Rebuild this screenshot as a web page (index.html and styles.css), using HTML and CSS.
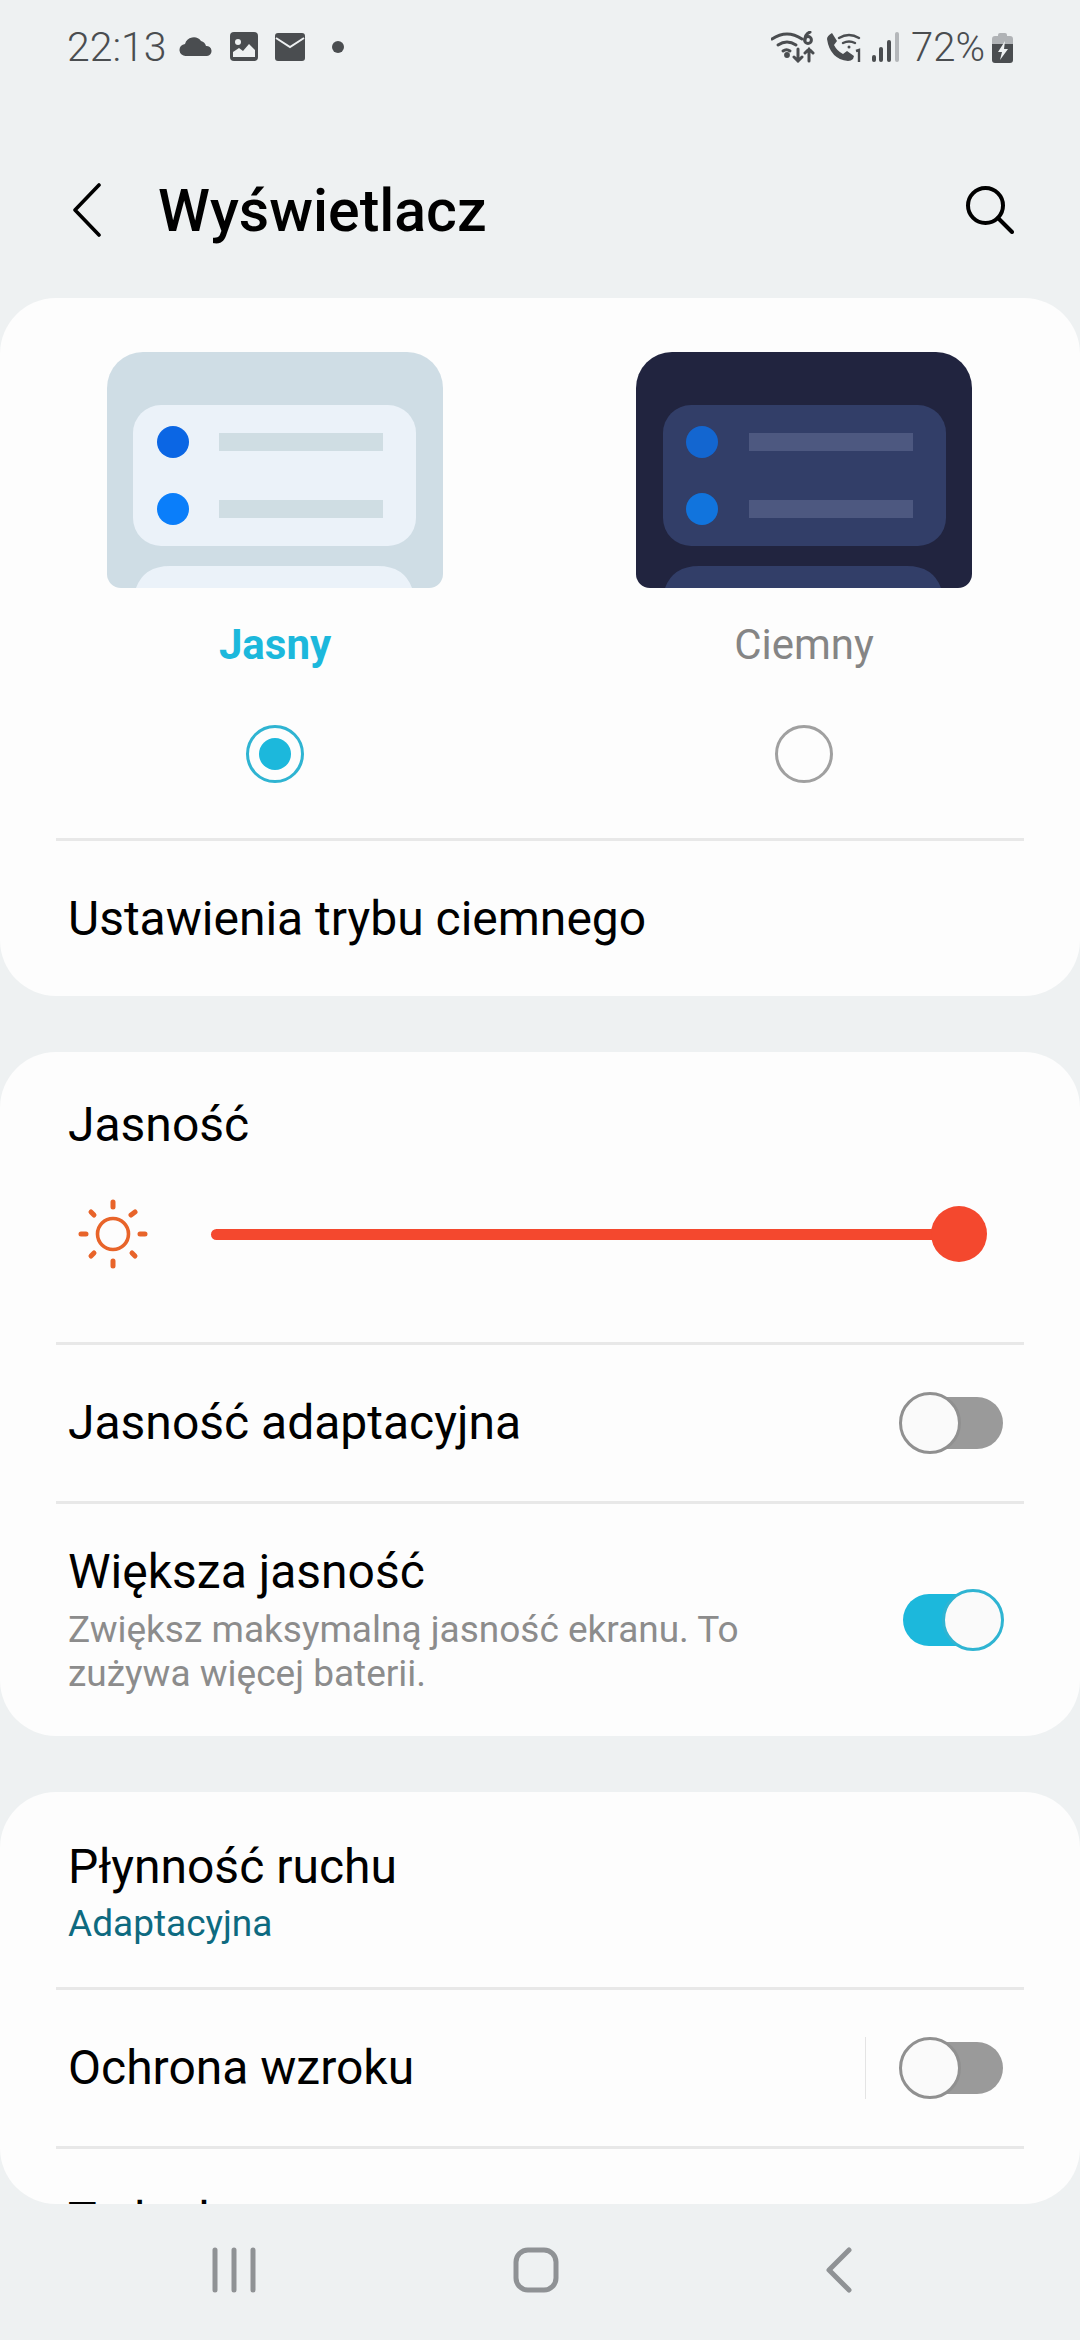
FILE: index.html
```html
<!DOCTYPE html>
<html lang="pl">
<head>
  <meta charset="UTF-8">
  <meta name="viewport" content="width=device-width, initial-scale=1.0">
  <title>Wyświetlacz</title>
  <link rel="stylesheet" href="styles.css">
</head>
<body>
  <div class="screen">
    <!-- Status bar -->
    <div class="status-bar">
      <div class="status-left">
        <span class="clock">22:13</span>
        <svg width="34" height="20" viewBox="0 0 34 20"><path d="M7 19a6 6 0 0 1-1-12 9 9 0 0 1 16-3 7 7 0 0 1 5 5 5 5 0 0 1 1 10z" fill="#4a4d50"/></svg>
        <svg width="30" height="30" viewBox="0 0 30 30"><rect width="28" height="29" x="1" rx="4" fill="#4a4d50"/><circle cx="9" cy="10" r="3" fill="#eef1f2"/><path d="M4 25v-5l6-4 4 3 6-7 6 6v7z" fill="#eef1f2"/></svg>
        <svg width="30" height="28" viewBox="0 0 30 28"><rect width="30" height="28" rx="3" fill="#4a4d50"/><path d="M1 5l14 9 14-9" fill="none" stroke="#eef1f2" stroke-width="2"/></svg>
        <span class="notif-dot"></span>
      </div>
      <div class="status-right">
        <svg class="wifi" width="44" height="32" viewBox="0 0 44 32" fill="none" stroke="#4a4d50" stroke-width="3" stroke-linecap="round"><path d="M1 8q15-10 30 0"/><path d="M7 14q9-6 18 0"/><path d="M12 20q3.5-2.5 7 0"/><circle cx="16" cy="24" r="1.4" fill="#4a4d50"/><path d="M27 18v12M23 26l4 4 4-4"/><path d="M38 30V18M34 22l4-4 4 4"/><circle cx="37" cy="9" r="3.4"/><path d="M34 9q0-6 5-8"/></svg>
        <svg class="call" width="37" height="30" viewBox="0 0 37 30" fill="none"><path d="M6 1l5 8-3 4q3 6 9 9l4-3 7 5-1 3q-2 2-5 2Q4 27 1 7q0-3 5-6z" fill="#4a4d50"/><path d="M13 6q10-6 20 0M17 11q6-3 12 0" stroke="#4a4d50" stroke-width="2.4" stroke-linecap="round"/><circle cx="23" cy="15" r="1.5" fill="#4a4d50"/><path d="M30 19l3-1v12" stroke="#4a4d50" stroke-width="2.4"/></svg>
        <svg class="signal" width="27" height="30" viewBox="0 0 27 30"><rect x="0" y="23" width="4" height="7" rx="2" fill="#4a4d50"/><rect x="7" y="15" width="4" height="15" rx="2" fill="#4a4d50"/><rect x="15" y="8" width="4" height="22" rx="2" fill="#4a4d50"/><rect x="23" y="0" width="4" height="30" rx="2" fill="#b4b7ba"/></svg>
        <span class="battery-text">72%</span>
        <svg width="21" height="31" viewBox="0 0 21 31"><path d="M6 3q0-2 2-2h5q2 0 2 2v1h3q3 0 3 3v5H0V7q0-3 3-3h3z" fill="#b0b3b6"/><path d="M0 12h21v16q0 3-3 3H3q-3 0-3-3z" fill="#4a4d50"/><path d="M13 9l-7 11h4l-2 8 8-11h-4z" fill="#eef1f2"/></svg>
      </div>
    </div>

    <!-- Header -->
    <div class="header">
      <svg width="30" height="54" viewBox="0 0 30 54" fill="none"><path d="M27 2L3 27l24 25" stroke="#000" stroke-width="3.6" stroke-linecap="round" stroke-linejoin="round"/></svg>
      <h1 class="title">Wyświetlacz</h1>
      <svg width="48" height="48" viewBox="0 0 48 48" fill="none" stroke="#000" stroke-width="4" stroke-linecap="round"><circle cx="19.5" cy="19.5" r="17.5"/><path d="M32 32l14 14"/></svg>
    </div>

    <div class="scroller">
      <!-- Theme card -->
      <div class="card">
        <div class="themes">
          <div class="theme">
            <svg width="336" height="236" viewBox="0 0 336 236">
              <path d="M36 0h264a36 36 0 0 1 36 36v186a14 14 0 0 1-14 14H14a14 14 0 0 1-14-14V36A36 36 0 0 1 36 0z" fill="#cfdde5"/>
              <rect x="26" y="53" width="283" height="141" rx="28" fill="#ebf2f9"/>
              <path d="M29 236q8-22 34-22h208q26 0 34 22z" fill="#ebf2f9"/>
              <circle cx="66" cy="90" r="16" fill="#0b66e4"/>
              <circle cx="66" cy="157" r="16" fill="#0a7efa"/>
              <rect x="112" y="81" width="164" height="18" fill="#cfdde3"/>
              <rect x="112" y="148" width="164" height="18" fill="#cfdde3"/>
            </svg>
            <div class="theme-label active">Jasny</div>
            <span class="radio checked"></span>
          </div>
          <div class="theme">
            <svg width="336" height="236" viewBox="0 0 336 236">
              <path d="M36 0h264a36 36 0 0 1 36 36v186a14 14 0 0 1-14 14H14a14 14 0 0 1-14-14V36A36 36 0 0 1 36 0z" fill="#21243f"/>
              <rect x="27" y="53" width="283" height="141" rx="28" fill="#323e68"/>
              <path d="M29 236q8-22 34-22h208q26 0 34 22z" fill="#323e68"/>
              <circle cx="66" cy="90" r="16" fill="#1366d0"/>
              <circle cx="66" cy="157" r="16" fill="#1174dd"/>
              <rect x="113" y="81" width="164" height="18" fill="#4d5880"/>
              <rect x="113" y="148" width="164" height="18" fill="#4d5880"/>
            </svg>
            <div class="theme-label">Ciemny</div>
            <span class="radio"></span>
          </div>
        </div>
        <div class="row row-first with-line">
          <span class="row-title">Ustawienia trybu ciemnego</span>
        </div>
      </div>

      <!-- Brightness card -->
      <div class="card">
        <div class="brightness">
          <span class="row-title">Jasność</span>
          <div class="slider-row">
            <svg width="70" height="70" viewBox="0 0 70 70" fill="none" stroke="#e8642a" stroke-linecap="round">
              <circle cx="35" cy="35" r="15.5" stroke-width="3.6"/>
              <path stroke-width="5" d="M35 3v5M35 62v5M3 35h5M62 35h5M13 13l3 3M54 54l3 3M57 13l-4 3M13 57l3-3"/>
            </svg>
            <div class="slider"><span class="slider-thumb"></span></div>
          </div>
        </div>
        <div class="row row-single with-line">
          <span class="row-title">Jasność adaptacyjna</span>
          <span class="toggle"></span>
        </div>
        <div class="row row-tall with-line">
          <div class="row-text">
            <span class="row-title">Większa jasność</span>
            <span class="row-sub">Zwiększ maksymalną jasność ekranu. To zużywa więcej baterii.</span>
          </div>
          <span class="toggle on"></span>
        </div>
      </div>

      <!-- Motion card, cut off by the nav bar -->
      <div class="card">
        <div class="row row-motion">
          <div class="row-text">
            <span class="row-title">Płynność ruchu</span>
            <span class="row-value">Adaptacyjna</span>
          </div>
        </div>
        <div class="row row-single with-line">
          <span class="row-title">Ochrona wzroku</span>
          <span class="v-line"></span>
          <span class="toggle"></span>
        </div>
        <div class="row row-cut with-line">
          <span class="row-title">Tryb ekranu</span>
        </div>
      </div>
    </div>

    <!-- Nav bar -->
    <div class="nav-bar">
      <svg class="nav-recent" width="46" height="46" viewBox="0 0 46 46" fill="none" stroke="#8f9295" stroke-width="5" stroke-linecap="round"><path d="M4 3v40M23 3v40M42 3v40"/></svg>
      <svg class="nav-home" width="46" height="46" viewBox="0 0 46 46" fill="none" stroke="#8f9295" stroke-width="5"><rect x="3" y="3" width="40" height="40" rx="12"/></svg>
      <svg width="28" height="46" viewBox="0 0 28 46" fill="none" stroke="#8f9295" stroke-width="5" stroke-linecap="round" stroke-linejoin="round"><path d="M24 3L4 23l20 20"/></svg>
    </div>
  </div>
</body>
</html>
```

FILE: styles.css
```css
html, body {
  margin: 0;
  padding: 0;
}

body {
  background-color: #eef1f2;
  font-family: Roboto, "Noto Sans", sans-serif;
  color: #000;
}

.screen {
  width: 1080px;
  height: 2340px;
  display: flex;
  flex-direction: column;
  overflow: hidden;
}

/* Status bar */
.status-bar {
  height: 92px;
  flex: none;
  padding: 2px 67px 0 67px;
  box-sizing: border-box;
  display: flex;
  justify-content: space-between;
  align-items: center;
  color: #4a4d50;
  font-weight: 300;
}

.status-left, .status-right {
  display: flex;
  align-items: center;
}

.status-left {
  gap: 16px;
}

.clock {
  margin-right: -4px;
  font-size: 41px;
}

.wifi {
  margin-right: 11px;
}

.call {
  margin-right: 9px;
}

.signal {
  margin-right: 12px;
}

.battery-text {
  margin-right: 7px;
  font-size: 40px;
}

.notif-dot {
  width: 12px;
  height: 12px;
  margin-left: 11px;
  border-radius: 50%;
  background-color: #4a4d50;
}

/* Header */
.header {
  height: 176px;
  flex: none;
  padding: 30px 66px 0 72px;
  display: flex;
  align-items: center;
}

.title {
  margin: 0 0 0 56px;
  flex: 1;
  font-size: 59px;
  font-weight: 500;
}

/* Cards */
.scroller {
  height: 1906px;
  flex: none;
  overflow: hidden;
  border-radius: 0 0 56px 56px;
}

.card {
  background-color: #fdfdfd;
  border-radius: 56px;
  margin-bottom: 56px;
  padding: 0 56px;
}

.themes {
  padding-top: 54px;
  display: flex;
  justify-content: space-between;
  margin: 0 52px 0 51px;
}

.theme {
  width: 336px;
  height: 486px;
  display: flex;
  flex-direction: column;
  align-items: center;
}

.theme-label {
  margin-top: 34px;
  height: 45px;
  line-height: 45px;
  font-size: 42px;
  color: #858585;
}

.theme-label.active {
  color: #1cb8dc;
  font-weight: 700;
}

.radio {
  margin-top: 58px;
  width: 52px;
  height: 52px;
  border: 3px solid #a0a0a0;
  border-radius: 50%;
  display: flex;
  align-items: center;
  justify-content: center;
}

.radio.checked {
  border-color: #2fb4d2;
}

.radio.checked::after {
  content: "";
  width: 32px;
  height: 32px;
  border-radius: 50%;
  background-color: #1cb8dc;
}

/* Rows */
.row {
  display: flex;
  align-items: center;
  padding: 0 21px 0 12px;
}

.with-line {
  border-top: 3px solid #e8e8e8;
}

.row-first {
  height: 155px;
}

.row-single {
  height: 156px;
}

.row-tall {
  height: 232px;
}

.row-motion {
  height: 189px;
  padding-top: 6px;
}

/* Only the tops of the letters show above the nav bar */
.row-cut {
  height: 142px;
  padding-bottom: 14px;
}

.row-text {
  flex: 1;
  display: flex;
  flex-direction: column;
}

.row-title {
  flex: 1;
  font-size: 48px;
  line-height: 56px;
}

.row-sub {
  width: 720px;
  margin-top: 8px;
  font-size: 37px;
  line-height: 44px;
  color: #8c8c8c;
}

.row-value {
  margin-top: 7px;
  font-size: 37px;
  line-height: 44px;
  color: #0e6a80;
}

/* Brightness */
.brightness {
  padding: 45px 12px 0;
  height: 290px;
  box-sizing: border-box;
}

.slider-row {
  display: flex;
  align-items: center;
  margin-top: 46px;
  margin-left: 10px;
  gap: 63px;
}

.slider {
  width: 771px;
  height: 11px;
  border-radius: 6px;
  background-color: #f4482e;
  position: relative;
}

.slider-thumb {
  position: absolute;
  right: -5px;
  top: -23px;
  width: 56px;
  height: 56px;
  border-radius: 50%;
  background-color: #f4482e;
}

/* Switches */
.toggle {
  width: 103px;
  height: 52px;
  border-radius: 26px;
  background-color: #9a9a9a;
  position: relative;
  flex: none;
}

.toggle::after {
  content: "";
  position: absolute;
  left: -1px;
  top: -5px;
  width: 56px;
  height: 56px;
  border: 3px solid #909090;
  border-radius: 50%;
  background-color: #fafafa;
}

.toggle.on {
  width: 100px;
  background-color: #1cb8dc;
}

.toggle.on::after {
  left: auto;
  right: -1px;
  border-color: #2fb4d2;
}

.v-line {
  width: 1px;
  height: 62px;
  margin-right: 34px;
  background-color: #e4e4e4;
}

/* Nav bar */
.nav-bar {
  flex: 1;
  padding: 0 0 4px 211px;
  display: flex;
  align-items: center;
}

.nav-recent {
  margin-right: 256px;
}

.nav-home {
  margin-right: 266px;
}
```
